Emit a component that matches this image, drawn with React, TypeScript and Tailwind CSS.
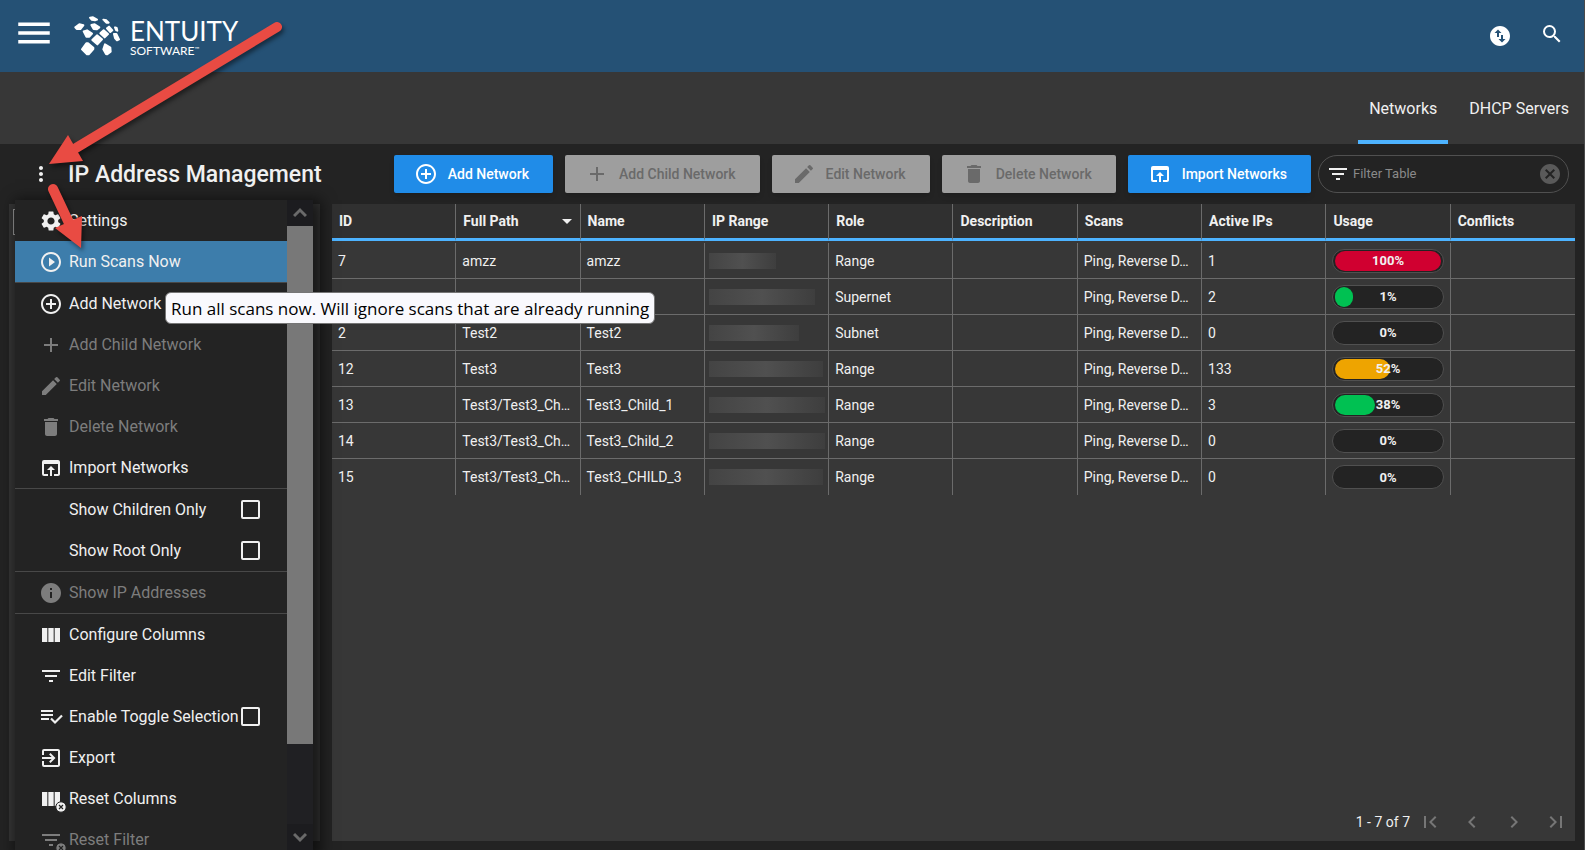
import React, { useState } from "react";
import type { IconType } from "react-icons";
import {
  MdAdd,
  MdAddCircleOutline,
  MdArrowDropDown,
  MdCancel,
  MdChevronLeft,
  MdChevronRight,
  MdDelete,
  MdEdit,
  MdExitToApp,
  MdFilterList,
  MdFirstPage,
  MdInfo,
  MdLastPage,
  MdMenu,
  MdMoreVert,
  MdOpenInBrowser,
  MdPlayCircleOutline,
  MdSearch,
  MdSettings,
  MdSwapVerticalCircle,
  MdViewColumn,
} from "react-icons/md";

type MenuEntry = {
  label: string;
  icon?: IconType | typeof ToggleIcon;
  disabled?: boolean;
  active?: boolean;
  reset?: boolean;
  check?: boolean;
  divider?: boolean;
};

function ToggleIcon({ className }: { className?: string }) {
  return (
    <svg className={className} viewBox="0 0 24 24" fill="currentColor">
      <path d="M2 5h12v2H2zM2 9h12v2H2zM2 13h8v2H2z" />
      <path d="M12 13.5l4 4 7-7" fill="none" stroke="currentColor" strokeWidth="2.2" />
    </svg>
  );
}

const menuEntries: MenuEntry[] = [
  { label: "Settings", icon: MdSettings },
  { label: "Run Scans Now", icon: MdPlayCircleOutline, active: true, divider: true },
  { label: "Add Network", icon: MdAddCircleOutline },
  { label: "Add Child Network", icon: MdAdd, disabled: true },
  { label: "Edit Network", icon: MdEdit, disabled: true },
  { label: "Delete Network", icon: MdDelete, disabled: true },
  { label: "Import Networks", icon: MdOpenInBrowser, divider: true },
  { label: "Show Children Only", check: true },
  { label: "Show Root Only", check: true, divider: true },
  { label: "Show IP Addresses", icon: MdInfo, disabled: true, divider: true },
  { label: "Configure Columns", icon: MdViewColumn },
  { label: "Edit Filter", icon: MdFilterList },
  { label: "Enable Toggle Selection", icon: ToggleIcon, check: true },
  { label: "Export", icon: MdExitToApp },
  { label: "Reset Columns", icon: MdViewColumn, reset: true },
  { label: "Reset Filter", icon: MdFilterList, reset: true, disabled: true },
];

const toolbar = [
  { label: "Add Network", icon: MdAddCircleOutline },
  { label: "Add Child Network", icon: MdAdd, disabled: true },
  { label: "Edit Network", icon: MdEdit, disabled: true },
  { label: "Delete Network", icon: MdDelete, disabled: true },
  { label: "Import Networks", icon: MdOpenInBrowser },
];

const columns = ["ID", "Full Path", "Name", "IP Range", "Role", "Description", "Scans", "Active IPs", "Usage", "Conflicts"];

// mask is the width of the hidden address in the IP Range column
const rows = [
  { id: "7", path: "amzz", name: "amzz", mask: 67, role: "Range", active: 1, usage: 100 },
  { id: "", path: "", name: "", mask: 106, role: "Supernet", active: 2, usage: 1 },
  { id: "2", path: "Test2", name: "Test2", mask: 90, role: "Subnet", active: 0, usage: 0 },
  { id: "12", path: "Test3", name: "Test3", mask: 114, role: "Range", active: 133, usage: 52 },
  { id: "13", path: "Test3/Test3_Ch…", name: "Test3_Child_1", mask: 116, role: "Range", active: 3, usage: 38 },
  { id: "14", path: "Test3/Test3_Ch…", name: "Test3_Child_2", mask: 116, role: "Range", active: 0, usage: 0 },
  { id: "15", path: "Test3/Test3_Ch…", name: "Test3_CHILD_3", mask: 114, role: "Range", active: 0, usage: 0 },
];

function Logo() {
  return (
    <div className="flex items-center gap-2.5 text-white">
      <svg className="h-10 w-[46px]" viewBox="221 49 138 120" fill="currentColor" stroke="currentColor" strokeWidth="6" strokeLinejoin="round">
        <path d="M269 54L278 53L290 60L284 62L274 60Z" />
        <path d="M309 60L318 62L325 69L318 69Z" />
        <path d="M225 83L237 74L249 77L240 88L229 88Z" />
        <path d="M273 76L283 74L297 83L289 89L280 88Z" />
        <path d="M320 86L326 81L336 92L330 97Z" />
        <path d="M344 83L349 85L351 93L347 91Z" />
        <path d="M250 95L260 92L275 102L267 111L258 111Z" />
        <path d="M300 101L310 92L323 103L313 113Z" />
        <path d="M341 103L348 103L356 119L350 122L344 115Z" />
        <path d="M276 121L290 107L305 119L291 134Z" />
        <path d="M245 149L258 131L263 131L279 144L279 148L265 164L260 164Z" />
        <path d="M309 149L314 134L330 144L331 156L320 164L317 163Z" />
      </svg>
      <div className="flex flex-col pt-0.5 font-[Lato,sans-serif]">
        <span className="text-[26px] leading-7">ENTUITY</span>
        <span className="flex items-start text-xs leading-3">
          SOFTWARE<span className="text-[6px] leading-2">™</span>
        </span>
      </div>
    </div>
  );
}

function UsageBar({ value }: { value: number }) {
  return (
    <div className="relative flex h-6 items-center rounded-full border border-[#505050] bg-[#232323] px-0.5">
      {value > 0 && (
        <div
          className={`h-5 min-w-[18px] rounded-full ${value >= 90 ? "bg-[#d00030]" : value >= 50 ? "bg-[#eea400]" : "bg-[#00c152]"}`}
          style={{ width: `${value}%` }}
        />
      )}
      <span className="absolute inset-0 flex items-center justify-center pt-0.5 text-[13px] font-bold">{value}%</span>
    </div>
  );
}

function MenuItem({ entry }: { entry: MenuEntry }) {
  const Icon = entry.icon;
  const color = entry.disabled ? "text-[#7d7d7d]" : "text-[#f0f0f0]";
  const content = (
    <>
      <span className="relative mr-1.5 size-6 shrink-0">
        {Icon && <Icon className="size-6" />}
        {entry.reset && (
          <svg className="absolute -right-1 -bottom-0.5 size-3" viewBox="0 0 12 12">
            <circle cx="6" cy="6" r="5.2" fill="currentColor" stroke="#232323" />
            <path d="M4 4l4 4M8 4l-4 4" stroke="#232323" strokeWidth="1.2" />
          </svg>
        )}
      </span>
      <span className="whitespace-nowrap">{entry.label}</span>
    </>
  );

  return (
    <li className="shrink-0">
      {entry.check ? (
        <label className={`flex h-[41px] items-center pr-[27px] pl-6 ${color}`}>
          {content}
          <input type="checkbox" className="ml-auto size-[19px] shrink-0 appearance-none rounded-xs border-2 border-[#f0f0f0] checked:bg-[#4db3ff]" />
        </label>
      ) : (
        <button
          disabled={entry.disabled}
          className={`flex h-[41px] w-full items-center pl-6 ${color} ${entry.active ? "bg-[#3d7dab]" : ""}`}
        >
          {content}
        </button>
      )}
      {entry.divider && <hr className="h-px border-0 bg-[#484848]" />}
    </li>
  );
}

function ContextMenu() {
  return (
    <div className="absolute -top-1 right-[7px] -bottom-[9px] left-1.5 z-10 flex bg-[#232323] shadow-[4px_4px_14px_4px_rgba(0,0,0,0.6)]">
      <ul className="flex min-w-0 flex-1 flex-col overflow-hidden text-base">
        {menuEntries.map((entry) => (
          <MenuItem key={entry.label} entry={entry} />
        ))}
      </ul>
      <div className="flex w-[26px] flex-col bg-[#202023] text-[#6a6a6a]">
        <div className="flex h-[26px] items-center justify-center bg-[#1c1c1f]">
          <svg className="h-3 w-3.5" viewBox="0 0 14 12" fill="none" stroke="currentColor" strokeWidth="3">
            <path d="M1 9l6-6 6 6" />
          </svg>
        </div>
        <div className="flex-[518] bg-[#787878]" />
        <div className="flex-[80]" />
        <div className="flex h-[26px] items-center justify-center bg-[#1c1c1f]">
          <svg className="h-3 w-3.5" viewBox="0 0 14 12" fill="none" stroke="currentColor" strokeWidth="3">
            <path d="M1 3l6 6 6-6" />
          </svg>
        </div>
      </div>
      <div
        role="tooltip"
        className="absolute top-[92px] left-[150px] z-20 rounded-md border border-[#767676] bg-[#f9f9fd] px-[5px] pt-0.5 font-['Open_Sans','Noto_Sans',sans-serif] text-[17px] leading-7 whitespace-nowrap text-black"
      >
        Run all scans now. Will ignore scans that are already running
      </div>
    </div>
  );
}

function Arrows() {
  return (
    <svg
      className="pointer-events-none absolute top-0 left-0 z-30 h-[260px] w-[300px] drop-shadow-[2px_3px_2px_rgba(0,0,0,0.45)]"
      viewBox="0 0 300 260"
      fill="#e94b43"
      stroke="#e94b43"
      strokeLinecap="round"
    >
      <path d="M277 27L76 148" strokeWidth="10" />
      <path d="M49 164l19-29 15 26z" stroke="none" />
      <path d="M53 189l16 34" strokeWidth="10" />
      <path d="M81 248l-26-20 27-12z" stroke="none" />
    </svg>
  );
}

export default function App() {
  const [filter, setFilter] = useState("");

  return (
    <div className="relative flex h-screen flex-col overflow-hidden border-r border-[#4a4a4a] bg-[#232323] font-[Roboto,sans-serif] text-[#f0f0f0]">
      <header className="flex h-[72px] shrink-0 items-center bg-[#255175] pr-5 pl-[13px] text-white">
        <button aria-label="Menu" className="mr-[19px] -mt-1.5">
          <MdMenu className="size-[42px]" />
        </button>
        <Logo />
        <div className="ml-auto flex items-center gap-7">
          <button aria-label="Transfers">
            <MdSwapVerticalCircle className="size-6" />
          </button>
          <button aria-label="Search" className="-mt-1">
            <MdSearch className="size-6" />
          </button>
        </div>
      </header>

      <nav className="flex h-[72px] shrink-0 justify-end gap-2.5 bg-[#373737] pr-1 text-base">
        <a href="#networks" className="flex items-center border-b-4 border-[#4db3ff] px-[11px] pt-1.5">
          Networks
        </a>
        <a href="#dhcp" className="flex items-center border-b-4 border-transparent px-[11px] pt-1.5">
          DHCP Servers
        </a>
      </nav>

      <div className="flex h-[60px] shrink-0 items-center pr-[15px] pl-[29px]">
        <button aria-label="More options">
          <MdMoreVert className="size-6" />
        </button>
        <h1 className="ml-[15px] pt-0.5 text-[23px] font-medium whitespace-nowrap">IP Address Management</h1>
        <div className="ml-auto flex gap-3">
          {toolbar.map(({ label, icon: Icon, disabled }) => (
            <button
              key={label}
              disabled={disabled}
              className={`flex h-[38px] items-center gap-2.5 rounded-xs pr-6 pl-5 text-sm font-medium whitespace-nowrap shadow-md ${
                disabled ? "bg-[#9e9e9e] text-[#6a6a6a]" : "bg-[#208ce8] text-white"
              }`}
            >
              <Icon className="size-6" />
              {label}
            </button>
          ))}
        </div>
        <div className="ml-[7px] flex h-[38px] w-[251px] items-center rounded-full border border-[#505050] pr-1.5 pl-[7px]">
          <MdFilterList className="size-6" />
          <input
            aria-label="Filter Table"
            placeholder="Filter Table"
            value={filter}
            onChange={(e) => setFilter(e.target.value)}
            className="ml-[3px] min-w-0 flex-1 bg-transparent text-[13px] outline-none placeholder:text-[#8a8a8a]"
          />
          <button aria-label="Clear filter" onClick={() => setFilter("")}>
            <MdCancel className="size-6 text-[#5a5a5a]" />
          </button>
        </div>
      </div>

      <main className="flex min-h-0 flex-1 gap-3 px-[9px] pb-[9px]">
        <aside className="relative w-[311px] shrink-0 bg-[#373737]">
          <div className="mt-[5px] ml-1 h-[26px] w-5 border border-[#a0a0a0]" />
          <ContextMenu />
        </aside>

        <section className="flex min-w-0 flex-1 flex-col bg-[#373737]">
          <table className="w-full table-fixed border-separate border-spacing-0 text-left text-sm">
            <thead>
              <tr className="bg-[#303030]">
                {columns.map((col) => (
                  <th key={col} className="h-[37px] border-r border-b-3 border-r-[#6b6b6b] border-b-[#4db3ff] px-[7px] font-bold last:border-r-0">
                    <div className="flex h-6 items-center justify-between">
                      {col}
                      {col === "Full Path" && <MdArrowDropDown className="-mr-1.5 size-6" />}
                    </div>
                  </th>
                ))}
              </tr>
            </thead>
            <tbody className="before:block before:h-0.5 [&_td]:h-9 [&_td]:truncate [&_td]:border-r [&_td]:border-b [&_td]:border-[#6b6b6b] [&_td]:px-1.5 [&_td:last-child]:border-r-0 [&_tr:last-child_td]:border-b-0">
              {rows.map((row, i) => (
                <tr key={i}>
                  <td>{row.id}</td>
                  <td>{row.path}</td>
                  <td>{row.name}</td>
                  <td>
                    <div
                      className="-ml-0.5 h-4 bg-linear-to-r from-[#444] via-[#505050] to-[#3e3e3e]"
                      style={{ width: row.mask }}
                    />
                  </td>
                  <td>{row.role}</td>
                  <td></td>
                  <td>Ping, Reverse D…</td>
                  <td>{row.active}</td>
                  <td>
                    <UsageBar value={row.usage} />
                  </td>
                  <td></td>
                </tr>
              ))}
            </tbody>
          </table>

          <div className="mt-auto flex h-[38px] items-center pr-[7px] text-sm">
            <span className="ml-auto">1 - 7 of 7</span>
            <div className="ml-2 flex gap-[18px] text-[#767676]">
              <button aria-label="First page" disabled>
                <MdFirstPage className="size-6" />
              </button>
              <button aria-label="Previous page" disabled>
                <MdChevronLeft className="size-6" />
              </button>
              <button aria-label="Next page" disabled>
                <MdChevronRight className="size-6" />
              </button>
              <button aria-label="Last page" disabled>
                <MdLastPage className="size-6" />
              </button>
            </div>
          </div>
        </section>
      </main>

      <Arrows />
    </div>
  );
}
